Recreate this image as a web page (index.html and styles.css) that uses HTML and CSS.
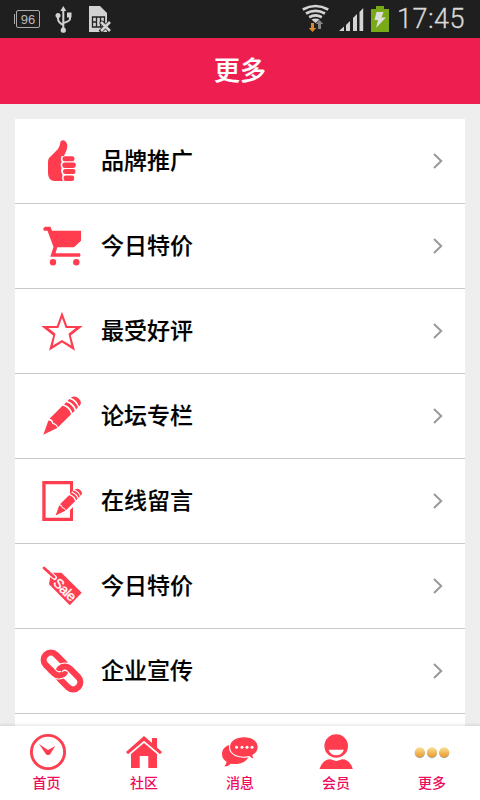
FILE: index.html
```html
<!DOCTYPE html>
<html lang="zh-CN">
<head>
<meta charset="utf-8">
<meta name="viewport" content="width=device-width">
<title>更多</title>
<link rel="stylesheet" href="styles.css">
</head>
<body>
<div class="status">
  <svg class="status-left" width="130" height="38" viewBox="0 0 130 38">
    <rect x="16.500" y="10.500" width="23" height="17" rx="1.500" fill="none" stroke="#aaa"/>
    <path d="M14.500 14v10" stroke="#aaa"/>
    <text x="28" y="23.700" class="battery-text" text-anchor="middle">96</text>
    <g fill="none" stroke="#d2d2d2" stroke-width="2">
      <path d="M63.300 9v21M58 16v3q0 3 5 6M70 15v4q0 2-6.500 4"/>
    </g>
    <g fill="#d2d2d2"><path d="M63.300 6l3 5h-6z"/><circle cx="58" cy="15.500" r="2.500"/><path d="M67 12.500h4.500v5H67z"/><circle cx="63.300" cy="30.200" r="2.600"/></g>
    <path d="M89 6h11l7 7v19H89z" fill="#d2d2d2"/>
    <path d="M92.500 17h12v10h-12zM96.500 17v10M100.500 17v10M92.500 22h4M100.500 22h4" fill="none" stroke="#222" stroke-width="1.300"/>
    <path d="M100.500 21.500l10.500 10.500M110.500 21.500L100 32" stroke="#1f1f1f" stroke-width="4"/>
    <path d="M101 22l9 9M110 22l-9 9" stroke="#d2d2d2" stroke-width="2.700"/>
  </svg>
  <svg class="status-right" width="90" height="38" viewBox="300 0 90 38">
    <g fill="none" stroke="#d4d4d4" stroke-width="2.700">
      <path d="M302.800 9.500q12.700-7 25.400 0M306 13.500q9.500-5.300 19 0M309.200 17.200q6.300-3.500 12.600 0"/>
    </g>
    <path d="M311.500 19.500q4-2 8 0l-4 3.500z" fill="#d4d4d4"/>
    <path d="M311 23h3v5h2.300l-3.800 4-3.800-4h2.300z" fill="#d98a2d"/>
    <path d="M318 29v-5h-2.300l3.800-4 3.800 4H321v5z" fill="#858585"/>
    <path d="M339 31l5-4.500V31zM346 25l4-4v10h-4zM353 18l4-4v17h-4zM359.500 12l3.700-4v23h-3.700z" fill="#d4d4d4"/>
    <path d="M371 9h5V6h8v3h5v23h-18z" fill="#78aa17"/>
    <path d="M376.500 12h7l-2 5.500h4.500L376 28l2-8h-3.500z" fill="#ddd"/>
  </svg>
  <span class="clock">17:45</span>
</div>
<header class="header">更多</header>
<main class="content">
  <ul class="list">
    <li class="row">
      <svg class="icon" viewBox="0 0 44 44"><path d="M20.500 2.500q2.500-2 4.500-.5c2.500 1.800 2.800 5.500 1.500 9.300L24 17h-2.500q-1.500 3 .2 6-2.200 3 0 6-1.500 3.500 .8 6.500-1 3.500 .3 6.500H14q-6-1-6-8V23q0-4 3-6l6.500-6.500q2.300-2.500 3-8z"/><rect x="22.500" y="17.300" width="12" height="5" rx="2.300"/><rect x="22.300" y="23.600" width="13.500" height="5.300" rx="2.300"/><rect x="23" y="30.100" width="12.500" height="5" rx="2.300"/><rect x="23.600" y="36.500" width="10.500" height="5.500" rx="2"/></svg>
      <span class="label">品牌推广</span><svg class="arrow" viewBox="0 0 10 16"><path d="M1 1l7.200 7L1 15"/></svg>
    </li>
    <li class="row">
      <svg class="icon" viewBox="0 0 44 44"><path d="M5 2.700h5.500L12 6.700h29v10L34 23.300H17.300l-1.800 6h24.200q1.500 1.700 0 3.500H10.300L13.500 23 7.500 6.700H4q-2-2 1-4z"/><circle cx="13" cy="38.300" r="3.200"/><circle cx="36.300" cy="38.300" r="3.200"/></svg>
      <span class="label">今日特价</span><svg class="arrow" viewBox="0 0 10 16"><path d="M1 1l7.200 7L1 15"/></svg>
    </li>
    <li class="row">
      <svg class="icon" viewBox="0 0 44 44"><path fill-rule="evenodd" d="M22 2.700l5.200 14.400h15.500L30.800 26.500 35 41.800 22 33.500 9 41.800l4.200-15.300L1.300 17.100h15.500zM22 9l-3.700 10.100H8.300l7.200 5.700-2.700 11.700L22 30.900l9.200 5.600-2.700-11.700 7.200-5.700h-10z"/></svg>
      <span class="label">最受好评</span><svg class="arrow" viewBox="0 0 10 16"><path d="M1 1l7.200 7L1 15"/></svg>
    </li>
    <li class="row">
      <svg class="icon" viewBox="0 0 44 44"><g id="pencil"><path d="M3.300 40.700L8.400 26.500q3.300 0 4 3.500 4 .5 4.800 3.900z"/><path d="M9.500 24.700L22.500 11.800q6.500 1.500 8.600 8.500L18 33.300q-1-3.500-4.700-4.500-.5-3.600-3.800-4.100z"/><path d="M24 10.400l2.200-2.200q6.500 2 8.500 8.500l-2.200 2.200q-2-6.500-8.500-8.500zM27.500 7l1.900-1.900q6.500 2 8.500 8.500L36 15.500q-2-6.500-8.500-8.500zM30.800 3.800q4-2.800 7.800.8 4.200 4 1 7.200l-.6.600q-2-6.500-8.200-8.600z"/></g></svg>
      <span class="label">论坛专栏</span><svg class="arrow" viewBox="0 0 10 16"><path d="M1 1l7.200 7L1 15"/></svg>
    </li>
    <li class="row">
      <svg class="icon" viewBox="0 0 44 44"><path d="M2.300 2H33v10l-3 3V5.200H5.600v33.500H30V31l3-3v14H2.300z"/><use href="#pencil" transform="translate(13.300 8) scale(.7)"/></svg>
      <span class="label">在线留言</span><svg class="arrow" viewBox="0 0 10 16"><path d="M1 1l7.200 7L1 15"/></svg>
    </li>
    <li class="row">
      <svg class="icon" viewBox="0 0 44 44"><path d="M11 8.800h10.500l20.200 20L29.800 41.300 9 20.300z"/><path d="M4 4l10.500 9.500" fill="none" stroke="#fff" stroke-width="5" stroke-linecap="round"/><path d="M4 4l10 9" fill="none" stroke="#ff3d4f" stroke-width="2.800" stroke-linecap="round"/><text class="sale" transform="translate(12.500 19.800) rotate(45)">Sale</text></svg>
      <span class="label">今日特价</span><svg class="arrow" viewBox="0 0 10 16"><path d="M1 1l7.200 7L1 15"/></svg>
    </li>
    <li class="row">
      <svg class="icon" viewBox="0 0 44 44"><g fill="none" stroke-width="6.200"><rect x="-13" y="-7.200" width="26" height="14.400" rx="7.200" transform="translate(15 15) rotate(45)" stroke="#ff3d4f"/><path transform="translate(29 29) rotate(45)" d="M-2 7.200H-5.800A7.200 7.200 0 0 1-5.800-7.200H2" stroke="#fff" stroke-width="8.400"/><rect x="-13" y="-7.200" width="26" height="14.400" rx="7.200" transform="translate(29 29) rotate(45)" stroke="#ff3d4f"/><path transform="translate(15 15) rotate(45)" d="M3 7.200h2.800a7.200 7.200 0 0 0 6.900-5.200" stroke="#fff" stroke-width="8.400"/><path transform="translate(15 15) rotate(45)" d="M1 7.200h4.800a7.200 7.200 0 0 0 7.200-6.200" stroke="#ff3d4f"/></g></svg>
      <span class="label">企业宣传</span><svg class="arrow" viewBox="0 0 10 16"><path d="M1 1l7.200 7L1 15"/></svg>
    </li>
  </ul>
</main>
<nav class="nav">
  <a class="tab tab-first"><svg class="icon" viewBox="0 0 44 44"><circle cx="22" cy="22" r="16.600" fill="none" stroke="#ff3d4f" stroke-width="2.900"/><path d="M13 14l9 6 7.300-4-5.300 8.500q-2 1.200-3.800 0z"/></svg><span>首页</span></a>
  <a class="tab"><svg class="icon" viewBox="0 0 44 44"><path d="M22 6l8 7V8h5v9.500l5 4.500-2 2.200L22 10.700 6 24.200 4 22z"/><path d="M22 13L35 24V38h-8.700V26h-8.600v12H9V24z"/></svg><span>社区</span></a>
  <a class="tab"><svg class="icon" viewBox="0 0 44 44"><path d="M15 14.500c-7 0-11 4.500-11 9.500 0 3.500 1.600 6 4.500 7.700q0 2.500-2.200 4.800 4 0 6.500-2.800c8 1.500 15.500-1.300 18.200-7.500z"/><path d="M26 6.800c9 0 14.200 4.400 14.200 10.200 0 3.600-2 6.500-5.300 8.300q.2 2.300 2.100 4.300-4.200-.6-5.800-3C20.500 29 11.500 24.500 11.500 17c0-6 6-10.200 14.500-10.200z" stroke="#fff" stroke-width="1.100"/><g fill="#fff"><circle cx="18.500" cy="17.300" r="1.500"/><circle cx="24" cy="17.300" r="1.500"/><circle cx="29" cy="17.300" r="1.500"/><circle cx="34" cy="17.300" r="1.500"/></g></svg><span>消息</span></a>
  <a class="tab"><svg class="icon" viewBox="0 0 44 44"><circle cx="22.200" cy="16" r="11.800"/><path d="M14.500 19.800h15.400q-2 5.500-7.700 5.500t-7.700-5.500z" fill="#fff"/><path d="M5.500 39q2-7 8-9.500 3-.8 4.500.3 4.200 2.200 8.400 0 1.500-1.100 4.500-.3 6 2.500 8 9.500z"/></svg><span>会员</span></a>
  <a class="tab"><svg class="icon" viewBox="0 0 44 44"><defs><linearGradient id="gold" x1="0" y1="0" x2="0" y2="1"><stop stop-color="#f9e09a"/><stop offset="1" stop-color="#ed9826"/></linearGradient></defs><g fill="#aaa"><circle cx="9.800" cy="23.300" r="5"/><circle cx="22" cy="23.300" r="5"/><circle cx="34.200" cy="23.300" r="5"/></g><g fill="url(#gold)"><circle cx="9.800" cy="22.300" r="5"/><circle cx="22" cy="22.300" r="5"/><circle cx="34.200" cy="22.300" r="5"/></g></svg><span>更多</span></a>
</nav>
</body>
</html>
```
FILE: styles.css
```css
* { box-sizing: border-box; }
body {
  margin: 0;
  width: 480px;
  height: 800px;
  overflow: hidden;
  display: flex;
  flex-direction: column;
  background: #eee;
  font-family: "Noto Sans CJK SC", sans-serif;
}
svg { display: block; flex: none; }
.status {
  flex: none;
  height: 38px;
  display: flex;
  background: #1f1f1f;
}
.status-right { margin-left: 170px; }
.battery-text { font: 13px "Liberation Sans", sans-serif; fill: #bbb; }
.clock {
  margin-left: 7px;
  font: 27px/38px Roboto, sans-serif;
  font-weight: 300;
  letter-spacing: .5px;
  color: #d8d8d8;
  -webkit-text-stroke: .3px #d8d8d8;
  white-space: nowrap;
}
.header {
  flex: none;
  height: 66px;
  background: #ee1e50;
  color: #fff;
  font-size: 26px;
  font-weight: 500;
  line-height: 62px;
  text-align: center;
  -webkit-text-stroke: .2px #fff;
}
.content {
  flex: 1;
  min-height: 0;
  overflow: hidden;
  padding: 15px 15px 0;
}
.list {
  margin: 0;
  padding: 0;
  list-style: none;
  min-height: 620px;
  background: #fff;
}
.row {
  height: 85px;
  padding: 0 22px 0 25px;
  display: flex;
  align-items: center;
  border-bottom: 1px solid #c8c8c8;
}
.icon { width: 44px; height: 44px; fill: #ff3d4f; }
.label {
  flex: 1;
  margin-left: 17px;
  padding-bottom: 4px;
  font-size: 23px;
  font-weight: 500;
  line-height: 34px;
  color: #000;
  -webkit-text-stroke: .15px #000;
}
.arrow { width: 10px; height: 16px; fill: none; stroke: #999; stroke-width: 2; }
.sale { font: 13.5px "Liberation Sans", sans-serif; fill: #fff; stroke: #fff; stroke-width: .4px; letter-spacing: -.4px; }
.nav {
  flex: none;
  height: 74px;
  display: flex;
  background: #fff;
  box-shadow: 0 -1px 3px rgba(0, 0, 0, .12);
  position: relative;
}
.tab {
  flex: 1;
  padding-top: 4px;
  display: flex;
  flex-direction: column;
  align-items: center;
  font-size: 14px;
  font-weight: 500;
  line-height: 17px;
  color: #ed0c5c;
}
.tab-first span { margin-right: 3px; }
```
